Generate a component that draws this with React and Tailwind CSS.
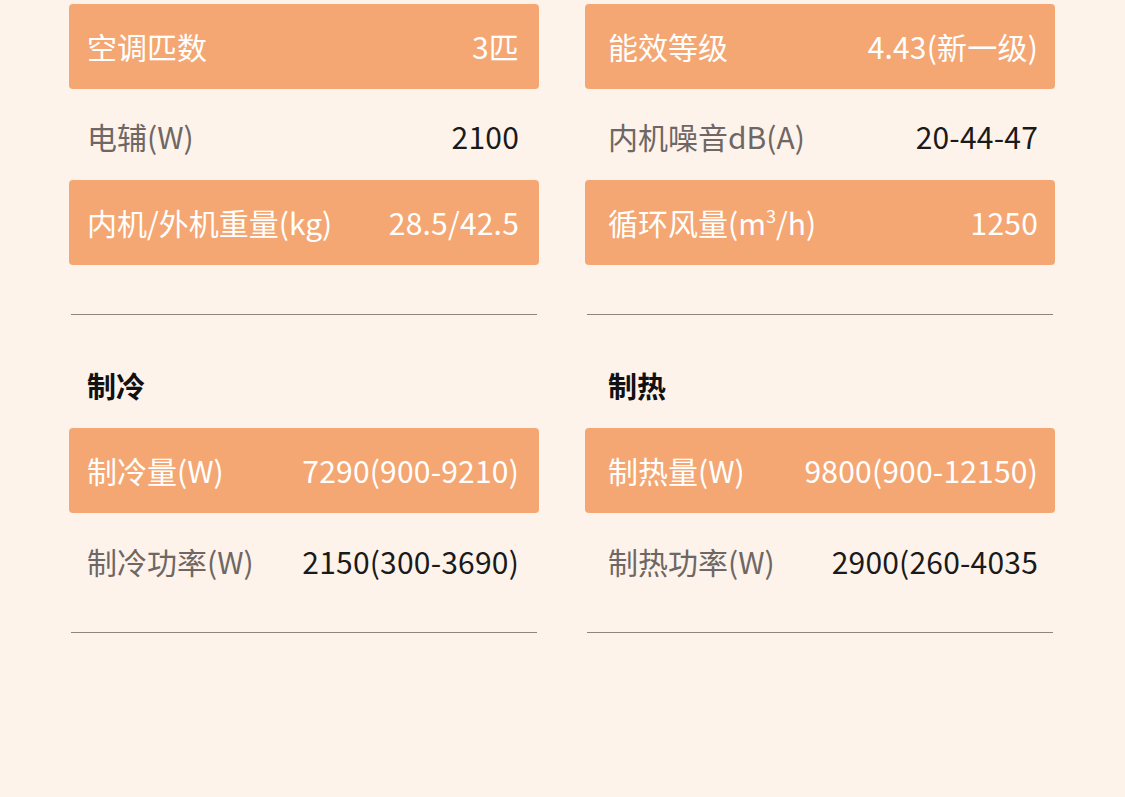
const FONT = "font-['Noto_Sans_CJK_SC','Noto_Sans',sans-serif]"

const columns = [
  {
    top: [
      { label: '空调匹数', value: '3匹', hl: true },
      { label: '电辅(W)', value: '2100' },
      { label: '内机/外机重量(kg)', value: '28.5/42.5', hl: true },
    ],
    title: '制冷',
    bottom: [
      { label: '制冷量(W)', value: '7290(900-9210)', hl: true },
      { label: '制冷功率(W)', value: '2150(300-3690)' },
    ],
    padL: 'pl-[18px]',
    padR: 'pr-[20px]',
  },
  {
    top: [
      { label: '能效等级', value: '4.43(新一级)', hl: true },
      { label: '内机噪音dB(A)', value: '20-44-47' },
      { label: <>循环风量(m<sup className="text-[18px] -top-[12px]">3</sup>/h)</>, value: '1250', hl: true },
    ],
    title: '制热',
    bottom: [
      { label: '制热量(W)', value: '9800(900-12150)', hl: true },
      { label: '制热功率(W)', value: '2900(260-4035' },
    ],
    padL: 'pl-[23px]',
    padR: 'pr-[17px]',
  },
]

function Row({ item, col, tall }) {
  if (item.hl) {
    return (
      <div className={`h-[85px] rounded-[4px] bg-[#f4a773] flex items-center justify-between ${col.padL} ${col.padR} pb-[2px] text-white`}>
        <span className="whitespace-nowrap">{item.label}</span>
        <span className="whitespace-nowrap tracking-[0.2px]">{item.value}</span>
      </div>
    )
  }
  return (
    <div className={`${tall ? 'h-[98px] pb-[2px]' : 'h-[91px] pt-[2px]'} flex items-center justify-between ${col.padL} ${col.padR}`}>
      <span className="whitespace-nowrap text-[#6e6764]">{item.label}</span>
      <span className="whitespace-nowrap text-[#1a1a1a] tracking-[0.2px]">{item.value}</span>
    </div>
  )
}

function Column({ col }) {
  return (
    <div className="flex flex-col">
      {col.top.map((item, i) => (
        <Row key={i} item={item} col={col} />
      ))}
      <div className="mt-[49px] mx-[2px] h-px bg-[#8c8682]" />
      <div className={`h-[113px] flex items-start pt-[56px] ${col.padL} font-bold text-[#111] text-[29px]`}>
        {col.title}
      </div>
      {col.bottom.map((item, i) => (
        <Row key={i} item={item} col={col} tall />
      ))}
      <div className="mt-[21px] mx-[2px] h-px bg-[#8c8682]" />
    </div>
  )
}

export default function App() {
  return (
    <div className={`w-[1125px] h-[797px] overflow-hidden bg-[#fef3eb] ${FONT} text-[30px] leading-none`}>
      <div className="grid grid-cols-[470px_470px] gap-x-[46px] pl-[69px] pt-[4px]">
        {columns.map((col, i) => (
          <Column key={i} col={col} />
        ))}
      </div>
    </div>
  )
}
